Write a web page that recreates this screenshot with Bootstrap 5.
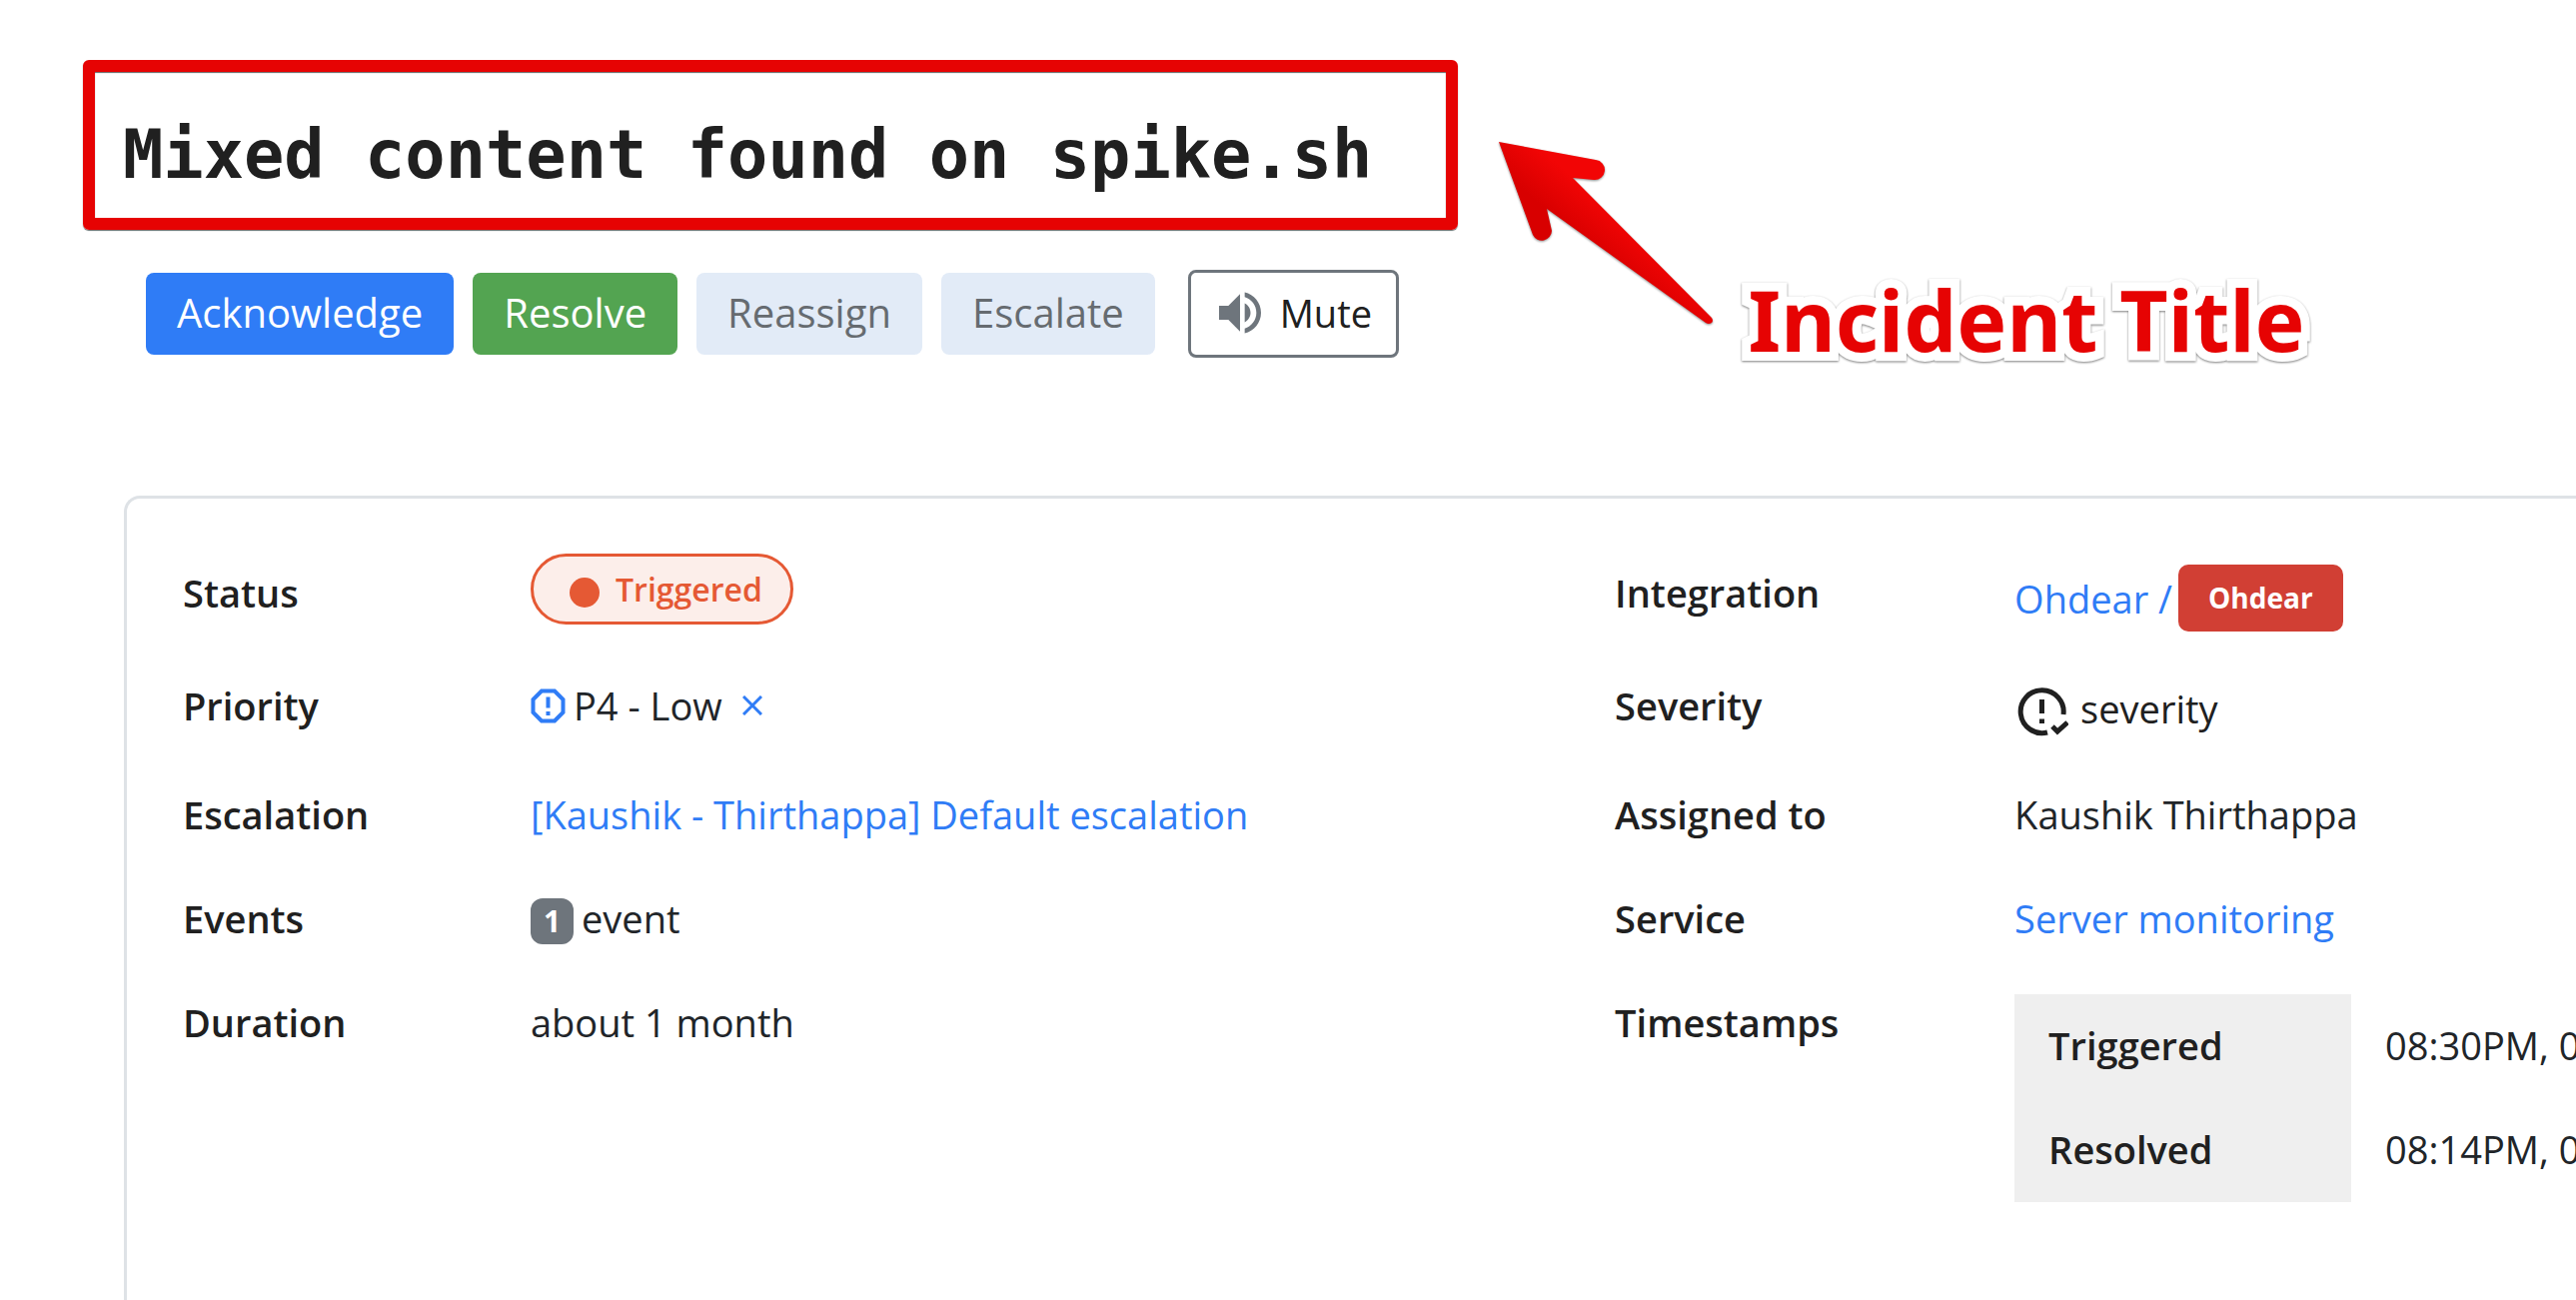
<!DOCTYPE html>
<html lang="en">
<head>
<meta charset="utf-8">
<meta name="viewport" content="width=device-width, initial-scale=1">
<title>Mixed content found on spike.sh</title>
<link href="https://cdn.jsdelivr.net/npm/bootstrap@5.3.0/dist/css/bootstrap.min.css" rel="stylesheet">
<style>
  :root { --ink: #202020; --blue: #2f7cf6; --note-red: #e60303; }
  body { font-family: "Open Sans", "Noto Sans", sans-serif; font-size: 38px; line-height: 56px; color: #212529; background: #fff; overflow: hidden; }
  a { color: var(--blue); text-decoration: none; }
  .incident-head { padding: 60px 0 0 83px; margin-bottom: 134px; }
  .title-frame { border: 12px solid var(--note-red); border-radius: 6px; padding: 43px 74px 23px 28px; box-shadow: 0 1px 1px rgba(0,0,0,.6), inset 0 1px 1px rgba(0,0,0,.6); }
  .title-frame h1 { font: 700 67px/80px "DejaVu Sans Mono", monospace; color: var(--ink); white-space: nowrap; }
  .actions { margin: 40px 0 0 63px; gap: 19px; }
  .actions .btn { font-size: 40px; line-height: 56px; padding: 12px 31px 14px; border: 0; border-radius: 8px; white-space: nowrap; }
  .btn-ack { --bs-btn-bg: var(--blue); --bs-btn-color: #fff; --bs-btn-hover-bg: #1f6be3; --bs-btn-hover-color: #fff; }
  .btn-res { --bs-btn-bg: #53a451; --bs-btn-color: #fff; --bs-btn-hover-bg: #468f44; --bs-btn-hover-color: #fff; }
  .btn-soft { --bs-btn-bg: #e2ebf7; --bs-btn-color: #666b70; --bs-btn-hover-bg: #d3e0f2; }
  .actions .btn-mute { border: 3px solid #6e757c; color: var(--ink); font-size: 38px; padding: 12px 24px 14px 21px; margin-left: 14px; gap: 12px; }
  .btn-mute svg { width: 56px; height: 56px; fill: #6e757c; }
  .note { padding: 82px 0 0 41px; }
  .note svg { width: 216px; height: 184px; overflow: visible; filter: drop-shadow(0 1px 1px rgba(0,0,0,.45)); }
  .note-text { font: 700 84px/84px "Noto Sans", sans-serif; color: var(--note-red); margin: 136px 0 0 33px; white-space: nowrap; -webkit-text-stroke: 18px #fff; paint-order: stroke fill; filter: drop-shadow(0 1px 1px rgba(0,0,0,.5)); }
  .incident-card { margin-left: 124px; border: 3px solid #dee2e6; border-width: 3px 0 0 3px; border-radius: 16px 0 0 0; padding: 44px 0 0 22px; }
  .side-a { flex: 0 0 59%; }
  .side-b { flex: 1 1 0; min-width: 0; }
  .facts { margin: 0; color: inherit; --bs-table-bg: transparent; }
  .facts > tbody > tr > th { font-weight: 600; color: var(--ink); width: 348px; }
  .side-b .facts > tbody > tr > th { min-width: 400px; }
  .facts > tbody > tr > th, .facts > tbody > tr > td { padding: 22px 34px 26px; white-space: nowrap; }
  .facts > tbody > tr:nth-child(1) { height: 113px; }
  .facts > tbody > tr:nth-child(2) { height: 109px; }
  .facts > tbody > tr > td.pill-cell { padding-top: 11px; padding-bottom: 11px; }
  .facts > tbody > tr > td.tag-cell { padding-bottom: 22px; }
  .facts > tbody > tr > td.holds-table { padding-right: 0; }
  .pill { border: 3px solid #e55934; border-radius: 36px; background: #fceeea; color: #e55934; font-size: 32px; font-weight: 600; line-height: 65px; padding: 0 28px 0 36px; gap: 16px; }
  .dot { width: 30px; height: 30px; border-radius: 50%; background: currentColor; margin-top: 6px; }
  .prio svg { width: 35px; height: 35px; }
  .prio .close-x { width: 20px; height: 20px; }
  .clear-btn { margin-left: 20px; }
  .count { width: 43px; height: 46px; border-radius: 12px; background: #6e757c; color: #fff; font-size: 30px; font-weight: 700; line-height: 46px; text-align: center; margin: 6px 8px 0 0; }
  .tag { border-radius: 10px; background: #d13f34; color: #fff; font-size: 28px; font-weight: 700; line-height: 67px; padding: 0 30px; margin-left: 6px; }
  .sev { color: var(--ink); gap: 12px; padding-top: 3px; }
  .sev svg { width: 54px; height: 56px; }
  .stamps { margin: 0; color: inherit; width: auto; --bs-table-bg: transparent; }
  .stamps > tbody > tr > th, .stamps > tbody > tr > td { padding: 23px 34px 25px; }
  .stamps > tbody > tr > th { background: #efefef; color: var(--ink); font-weight: 600; min-width: 337px; }
</style>
</head>
<body>
<main class="d-flex flex-column vh-100">
  <header class="incident-head d-flex align-items-start">
    <div>
      <div class="title-frame"><h1 class="m-0">Mixed content found on spike.sh</h1></div>
      <div class="actions d-flex align-items-center">
        <button type="button" class="btn btn-ack">Acknowledge</button>
        <button type="button" class="btn btn-res">Resolve</button>
        <button type="button" class="btn btn-soft">Reassign</button>
        <button type="button" class="btn btn-soft">Escalate</button>
        <button type="button" class="btn btn-mute d-flex align-items-center">
          <svg viewBox="0 0 24 24" aria-hidden="true"><path d="M3 9v6h4l5 5V4L7 9H3zm13.500 3c0-1.770-1.020-3.290-2.500-4.030v8.050c1.480-.730 2.500-2.250 2.500-4.020zM14 3.230v2.060c2.890.860 5 3.540 5 6.710s-2.110 5.850-5 6.710v2.060c4.010-.910 7-4.490 7-8.770s-2.990-7.860-7-8.770z"/></svg>
          Mute
        </button>
      </div>
    </div>
    <div class="note d-flex align-items-start">
      <svg viewBox="0 0 216 184" class="flex-shrink-0" aria-hidden="true">
        <defs><linearGradient id="arrowFill" gradientUnits="userSpaceOnUse" x1="46" y1="67" x2="74" y2="35"><stop offset="0" stop-color="#d80000"/><stop offset="1" stop-color="#f20505"/></linearGradient></defs>
        <path fill="url(#arrowFill)" d="M0 0 97 18A10 10 0 0 1 95 38L74 36 213 176Q215 179 213 181Q210 183 207 181L48 67 53 89A10 10 0 0 1 34 93Z"/>
      </svg>
      <div class="note-text">Incident Title</div>
    </div>
  </header>

  <section class="incident-card d-flex align-items-start flex-grow-1">
    <div class="side-a">
      <table class="table table-borderless facts">
        <tbody>
          <tr><th scope="row">Status</th><td class="pill-cell"><span class="pill d-inline-flex align-items-center"><span class="dot"></span>Triggered</span></td></tr>
          <tr><th scope="row">Priority</th><td><div class="prio d-flex align-items-center">
            <svg viewBox="0 0 35 35" class="me-2" fill="none" stroke="#2f7cf6" stroke-width="4" aria-hidden="true"><path d="M11 2.500H24L32.500 11V24L24 32.500H11L2.500 24V11Z"/><path d="M17.500 8.500V19.500M17.500 23V27"/></svg>
            P4 - Low
            <a href="#" class="clear-btn d-flex" aria-label="Clear priority"><svg class="close-x" viewBox="0 0 20 20" stroke="#2f7cf6" stroke-width="3" aria-hidden="true"><path d="M1 1 19 19M19 1 1 19"/></svg></a>
          </div></td></tr>
          <tr><th scope="row">Escalation</th><td><a href="#">[Kaushik - Thirthappa] Default escalation</a></td></tr>
          <tr><th scope="row">Events</th><td><div class="d-flex align-items-center"><span class="count">1</span>event</div></td></tr>
          <tr><th scope="row">Duration</th><td>about 1 month</td></tr>
        </tbody>
      </table>
    </div>
    <div class="side-b">
      <table class="table table-borderless facts">
        <tbody>
          <tr><th scope="row">Integration</th><td class="tag-cell"><div class="d-flex align-items-center"><a href="#">Ohdear /</a><span class="tag">Ohdear</span></div></td></tr>
          <tr><th scope="row">Severity</th><td><div class="sev d-flex align-items-center">
            <svg viewBox="0 0 54 56" fill="none" stroke="#202020" stroke-width="5" aria-hidden="true"><path d="M49 34A21.500 21.500 0 1 0 33 52"/><path d="M27.500 19V33M27.500 38.500V43"/><path d="M38 46 43 51 53 42"/></svg>
            severity</div></td></tr>
          <tr><th scope="row">Assigned to</th><td>Kaushik Thirthappa</td></tr>
          <tr><th scope="row">Service</th><td><a href="#">Server monitoring</a></td></tr>
          <tr><th scope="row">Timestamps</th><td class="holds-table">
            <table class="table table-borderless stamps"><tbody>
              <tr><th scope="row">Triggered</th><td>08:30PM, 0</td></tr>
              <tr><th scope="row">Resolved</th><td>08:14PM, 0</td></tr>
            </tbody></table>
          </td></tr>
        </tbody>
      </table>
    </div>
  </section>
</main>
<script src="https://cdn.jsdelivr.net/npm/bootstrap@5.3.0/dist/js/bootstrap.bundle.min.js"></script>
</body>
</html>
